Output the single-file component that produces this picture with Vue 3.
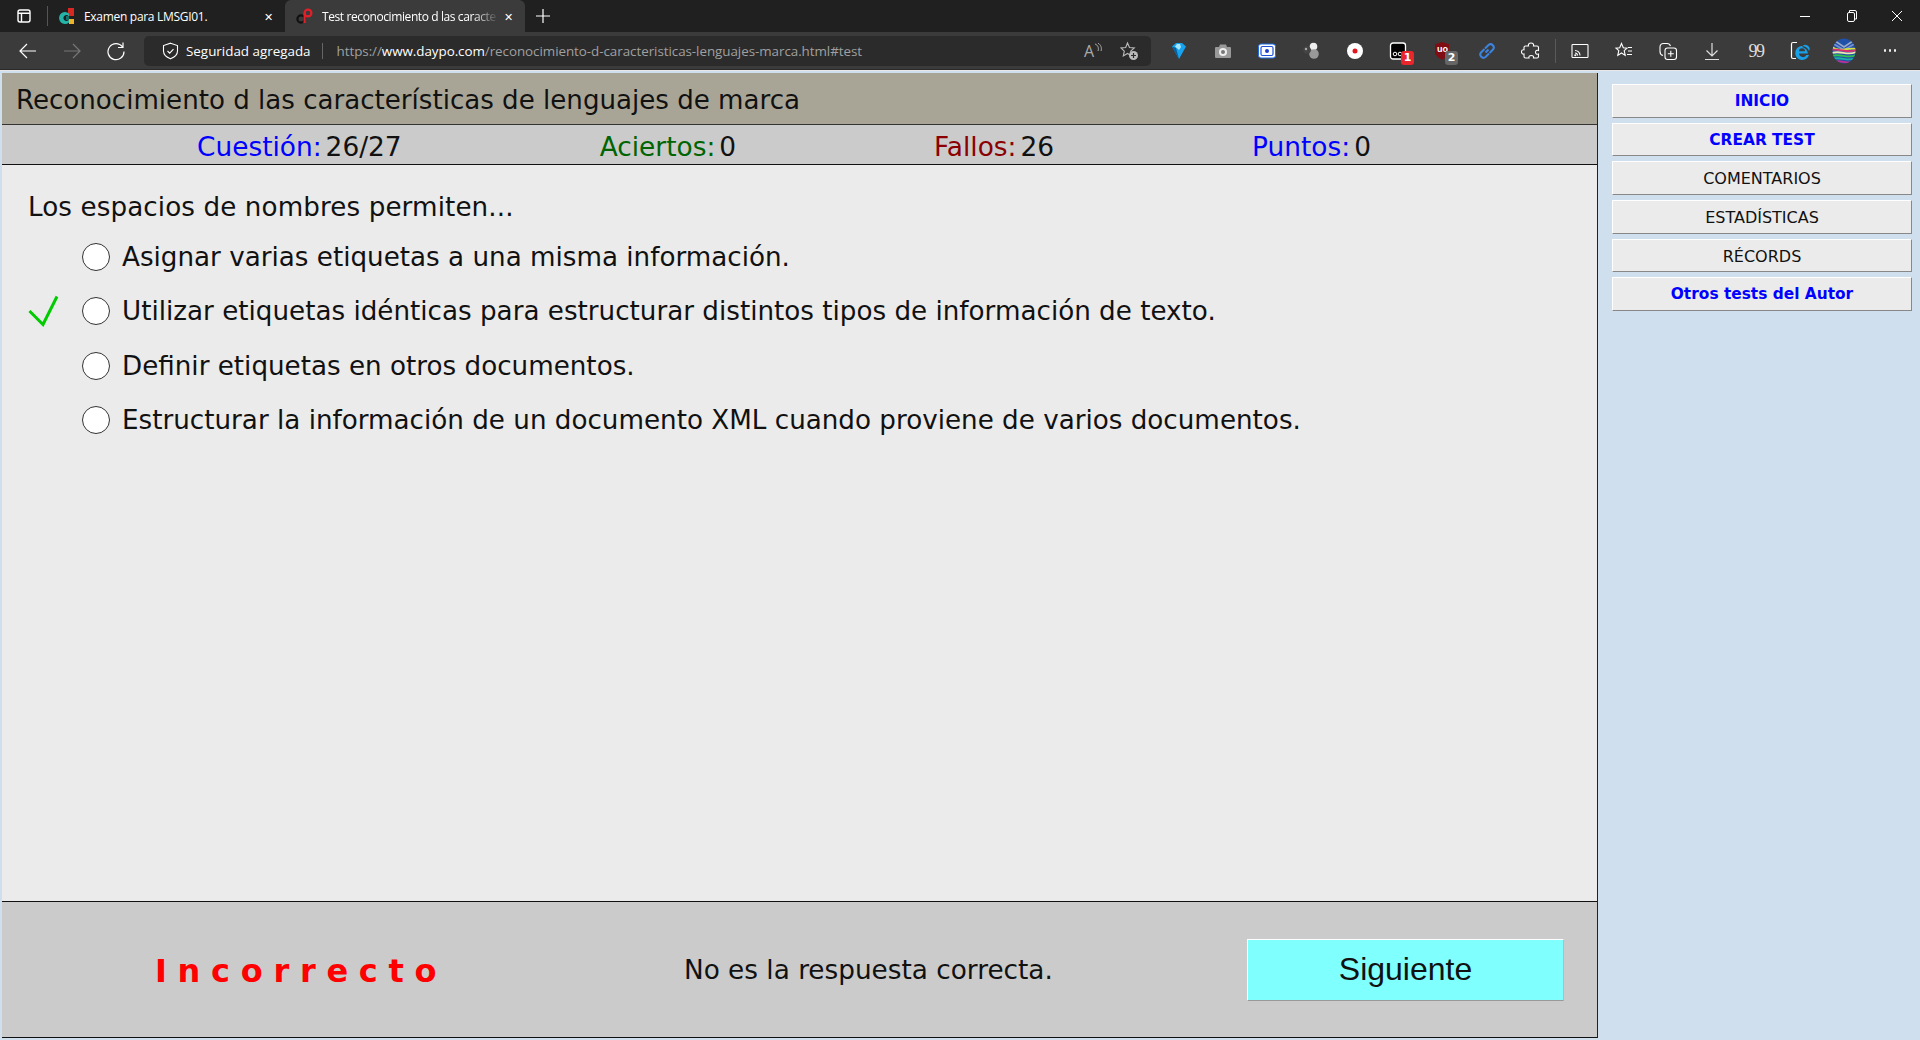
<template>
  <div class="window">
    <div class="tabstrip">
      <svg class="tab-actions" width="16" height="16" viewBox="0 0 16 16" fill="none" stroke="#fff" stroke-width="1.4">
        <rect x="2" y="2" width="12" height="12" rx="2" />
        <path d="M2 5.2h12M5.500 5.2V14" />
      </svg>
      <span class="strip-sep"></span>
      <div class="tab">
        <svg class="fav" width="17" height="17" viewBox="0 0 17 17">
          <rect x="10" y="0" width="6" height="8" fill="#d8281f" />
          <rect x="11" y="11" width="5" height="5" fill="#eeb52a" />
          <path d="M11 5.500A6 6 0 1 0 11 14.500L11 11.500A3 3 0 1 1 11 8.500Z" fill="#25b5a8" />
          <rect x="8" y="8" width="3" height="4" fill="#13736b" />
        </svg>
        <span class="tab-title">Examen para LMSGI01.</span>
        <span class="tab-x">✕</span>
      </div>
      <div class="tab active">
        <svg class="fav" width="17" height="17" viewBox="0 0 17 17" fill="none" stroke-width="2.2">
          <circle cx="5" cy="11" r="3.600" stroke="#111" />
          <circle cx="12" cy="5" r="3.400" stroke="#e3202a" />
          <path d="M8.600 15V5" stroke="#e3202a" />
        </svg>
        <span class="tab-title fade">Test reconocimiento d las caracte</span>
        <span class="tab-x">✕</span>
      </div>
      <svg class="new-tab" width="14" height="14" viewBox="0 0 14 14" stroke="#fff" stroke-width="1.2">
        <path d="M7 0v14M0 7h14" />
      </svg>
      <div class="win-controls">
        <svg width="46" height="16" viewBox="0 0 46 16" stroke="#fff" stroke-width="1"><path d="M18 8.500h10" /></svg>
        <svg width="46" height="16" viewBox="0 0 46 16" fill="none" stroke="#fff" stroke-width="1"><rect x="19.500" y="4.500" width="7" height="9" rx="1.500" /><path d="M21.500 4V2.500h5.500a1.500 1.500 0 0 1 1.500 1.500v7H27" /></svg>
        <svg width="46" height="16" viewBox="0 0 46 16" stroke="#fff" stroke-width="1"><path d="M18 3l10 10M28 3L18 13" /></svg>
      </div>
    </div>

    <div class="toolbar">
      <span class="tool">
        <svg width="20" height="20" viewBox="0 0 20 20" fill="none" stroke="#fff" stroke-width="1.2"><path d="M18 10H2M9 3l-7 7 7 7" /></svg>
      </span>
      <span class="tool">
        <svg width="20" height="20" viewBox="0 0 20 20" fill="none" stroke="#777" stroke-width="1.2"><path d="M2 10h16M11 3l7 7-7 7" /></svg>
      </span>
      <span class="tool">
        <svg width="20" height="20" viewBox="0 0 20 20" fill="none" stroke="#fff" stroke-width="1.2"><path d="M16.500 6A8 8 0 1 0 18 10.500M17 1.500V6.500H12" /></svg>
      </span>
      <div class="address">
        <svg class="shield" width="17" height="18" viewBox="0 0 17 18" fill="none" stroke="#fff" stroke-width="1.1"><path d="M8.500 1.200L15.500 3.600V9c0 3.600-3 6.200-7 7.800C4.500 15.200 1.500 12.600 1.500 9V3.600ZM5.500 9l2.200 2.200 3.800-4" /></svg>
        <span class="secure">Seguridad agregada</span>
        <span class="addr-sep"></span>
        <span class="url">https://<b>www.daypo.com</b>/reconocimiento-d-caracteristicas-lenguajes-marca.html#test</span>
        <span class="addr-icon read">
          A<svg width="9" height="12" viewBox="0 0 9 12" fill="none" stroke="#aaa" stroke-width="1"><path d="M1 1c3 1 4 4 3 7M4 0c3 2 4 5 3 8" /></svg>
        </span>
        <svg class="addr-icon" width="20" height="20" viewBox="0 0 20 20">
          <path d="M8.500 2l2 4.500 4.800.5-3.600 3.200 1 4.800-4.200-2.500-4.200 2.500 1-4.800L2 7l4.700-.5Z" fill="none" stroke="#bbb" stroke-width="1.100" />
          <circle cx="14.500" cy="14.500" r="4.500" fill="#bbb" />
          <path d="M14.500 12v5M12 14.500h5" stroke="#2b2b2b" stroke-width="1.200" />
        </svg>
      </div>
      <div class="ext-icons">
        <span class="tool">
          <svg width="20" height="20" viewBox="0 0 20 20"><path d="M3 5.500L7 2h6l4 3.500L10 18Z" fill="#17a3ee" /><path d="M6 5.500L8 3h3l1 3-2 3Z" fill="#a6e6ff" /><path d="M3 5.500L10 18 7 7Z" fill="#0a5f9e" /></svg>
        </span>
        <span class="tool">
          <svg width="20" height="20" viewBox="0 0 20 20"><path d="M3 6h3l1-2.500h6L14 6h3a1 1 0 0 1 1 1v9a1 1 0 0 1-1 1H3a1 1 0 0 1-1-1V7a1 1 0 0 1 1-1Z" fill="#999" /><circle cx="10" cy="11" r="4" fill="#eee" /><circle cx="10" cy="11" r="2" fill="#777" /></svg>
        </span>
        <span class="tool">
          <svg width="20" height="20" viewBox="0 0 20 20"><rect x="1.500" y="3" width="17" height="14" rx="2.500" fill="#fff" stroke="#1e6ce0" stroke-width="1" /><rect x="4" y="5.500" width="12" height="9" rx="1.500" fill="#fff" stroke="#1e50d8" stroke-width="1.200" /><circle cx="10" cy="10" r="2" fill="#1e3fc8" /></svg>
        </span>
        <span class="tool">
          <svg width="20" height="20" viewBox="0 0 20 20"><circle cx="12.500" cy="5.500" r="3.800" fill="#eee" /><circle cx="13" cy="13" r="4.800" fill="#999" /><circle cx="6" cy="9" r="3.800" fill="#444" /><circle cx="5" cy="8" r="1.200" fill="#aaa" /></svg>
        </span>
        <span class="tool">
          <svg width="20" height="20" viewBox="0 0 20 20"><circle cx="10" cy="10" r="8" fill="#fff" /><circle cx="10" cy="10" r="2.500" fill="#e4161f" /></svg>
        </span>
        <span class="tool">
          <svg width="20" height="20" viewBox="0 0 20 20"><rect x="1.500" y="2" width="15" height="16" rx="2.500" fill="#000" stroke="#fff" stroke-width="1.300" /><circle cx="6" cy="13" r="1.800" fill="none" stroke="#fff" /><circle cx="11" cy="13" r="1.800" fill="none" stroke="#fff" /></svg>
          <span class="badge red">1</span>
        </span>
        <span class="tool">
          <svg width="20" height="20" viewBox="0 0 20 20"><path d="M9 1l7 2.200v7c0 4-3 6.800-7 8.500-4-1.700-7-4.500-7-8.500v-7Z" fill="#7f0d13" /></svg>
          <span class="ublock">uo</span>
          <span class="badge grey">2</span>
        </span>
        <span class="tool">
          <svg width="20" height="20" viewBox="0 0 20 20" fill="none" stroke="#3b84e0" stroke-width="2"><path d="M8.500 11.500l3-3M7.500 8L4 11.500a3.200 3.200 0 0 0 4.500 4.500l3.500-3.500M12.500 12L16 8.500A3.200 3.200 0 0 0 11.500 4L8 7.500" /></svg>
        </span>
        <span class="tool">
          <svg width="20" height="20" viewBox="0 0 20 20" fill="none" stroke="#fff" stroke-width="1.100"><path d="M10 2c2 0 3 1.300 2.500 3H16c1 0 1.500.5 1.500 1.500v3c-1.700-.7-3 .3-3 1.800s1.300 2.300 3 1.700v2.500c0 1-.5 1.500-1.500 1.500h-3.500c.5-1.700-.5-2.500-2.200-2.500s-2.800.8-2.300 2.500H4.500c-1 0-1.500-.5-1.500-1.500V13c-1.500.3-2.500-.8-2.500-2.200S1.500 8.500 3 8.800V6.500C3 5.500 3.500 5 4.500 5h3C7 3.300 8 2 10 2Z" /></svg>
        </span>
      </div>
      <span class="tool-sep"></span>
      <span class="tool">
        <svg width="20" height="20" viewBox="0 0 20 20" fill="none" stroke="#fff" stroke-width="1.100"><rect x="2" y="3.500" width="16" height="13" rx=".8" /><path d="M5 9.500a5 5 0 0 1 5 5M5 12a2.500 2.500 0 0 1 2.500 2.500" /><circle cx="5.300" cy="14.300" r=".5" /></svg>
      </span>
      <span class="tool">
        <svg width="20" height="20" viewBox="0 0 20 20" fill="none" stroke="#fff" stroke-width="1.100"><path d="M7.500 2.500l1.800 4.300 3.700.3-2.800 2.600 1 4.700-3.700-2.400-3.700 2.400 1-4.700L2 7.100l3.700-.3ZM14 6.500h4M14 10h4M13 13.500h5" /></svg>
      </span>
      <span class="tool">
        <svg width="20" height="20" viewBox="0 0 20 20" fill="none" stroke="#fff" stroke-width="1.100"><path d="M5 14.500C3 14 2 12.500 2 10.500V6c0-2.500 1.500-3.500 3.500-3.500H9c1.500 0 3 .8 3.500 2.500" /><rect x="7" y="7" width="11.500" height="11.500" rx="2.500" /><path d="M12.800 9.800v6M9.800 12.800h6" /></svg>
      </span>
      <span class="tool">
        <svg width="20" height="20" viewBox="0 0 20 20" fill="none" stroke="#ddd" stroke-width="1.200"><path d="M10 2v12M4.500 9.500L10 15l5.500-5.500M3 18.500h14" /></svg>
      </span>
      <span class="tool quote">99</span>
      <span class="tool">
        <svg width="22" height="22" viewBox="0 0 22 22" fill="none"><path d="M8 2.500H4A1.500 1.500 0 0 0 2.500 4v13A1.500 1.500 0 0 0 4 18.500h3" stroke="#fff" stroke-width="1.200" /><path d="M19 13.500h-9a4 4 0 0 0 7.500 1.500h2.500a7 7 0 1 1 0-4A4 4 0 0 0 13 7a8 8 0 0 1 6 6.500Z" fill="#18a0e8" /><path d="M10 11.300h6A3 3 0 0 0 10 11.300Z" fill="#3b3b3b" /></svg>
      </span>
      <span class="tool">
        <svg width="24" height="26" viewBox="0 0 24 26">
          <defs><clipPath id="avatar-clip"><ellipse cx="12" cy="13" rx="11.500" ry="12.500" /></clipPath></defs>
          <g clip-path="url(#avatar-clip)" fill="none" stroke-width="1.800">
            <rect width="24" height="26" fill="#2050a8" />
            <path d="M0 1l12 8 12-8" stroke="#98a8c8" />
            <path d="M0 5l12 7 12-7" stroke="#7890d0" />
            <path d="M0 9c8 6 16 0 24 2" stroke="#d8e040" />
            <path d="M0 12c8-2 16 4 24 0" stroke="#d83070" />
            <path d="M0 15c8-3 16 3 24-1" stroke="#e8e8b0" />
            <path d="M0 18c8-3 16 3 24-1" stroke="#30c050" />
            <path d="M0 21c8-3 16 3 24-1" stroke="#18b0a8" />
            <path d="M0 24c8-3 16 3 24-1" stroke="#c03090" />
          </g>
        </svg>
      </span>
      <span class="tool more"><i></i><i></i><i></i></span>
    </div>

    <div class="page">
      <div class="main">
        <h1 class="title">Reconocimiento d las características de lenguajes de marca</h1>
        <div class="stats">
          <span v-for="s in stats" :key="s.label" class="stat">
            <span :style="{ color: s.color }">{{ s.label }}:</span><span class="stat-val">{{ s.value }}</span>
          </span>
        </div>
        <div class="question">
          <p class="q-text">Los espacios de nombres permiten...</p>
          <label v-for="(o, i) in options" :key="i" class="option">
            <span class="mark">
              <svg v-if="o.correct" width="32" height="32" viewBox="0 0 32 32" fill="none" stroke="#00cc00" stroke-width="3">
                <path d="M1.500 16L15 29.500 29 1.500" />
              </svg>
            </span>
            <input type="radio" name="answer" class="radio" />
            <span>{{ o.text }}</span>
          </label>
        </div>
        <div class="result">
          <span class="verdict">Incorrecto</span>
          <span class="explain">No es la respuesta correcta.</span>
          <button class="next">Siguiente</button>
        </div>
      </div>
      <div class="side">
        <a v-for="m in menu" :key="m.text" class="side-btn" :class="{ strong: m.strong }">{{ m.text }}</a>
      </div>
    </div>
  </div>
</template>

<script setup>
const stats = [
  { label: "Cuestión", value: "26/27", color: "#0000ff" },
  { label: "Aciertos", value: "0", color: "#006400" },
  { label: "Fallos", value: "26", color: "#8b0000" },
  { label: "Puntos", value: "0", color: "#0000ff" },
];

const options = [
  { text: "Asignar varias etiquetas a una misma información." },
  { text: "Utilizar etiquetas idénticas para estructurar distintos tipos de información de texto.", correct: true },
  { text: "Definir etiquetas en otros documentos." },
  { text: "Estructurar la información de un documento XML cuando proviene de varios documentos." },
];

const menu = [
  { text: "INICIO", strong: true },
  { text: "CREAR TEST", strong: true },
  { text: "COMENTARIOS" },
  { text: "ESTADÍSTICAS" },
  { text: "RÉCORDS" },
  { text: "Otros tests del Autor", strong: true },
];
</script>

<style>
html,
body {
  margin: 0;
  overflow: hidden;
  background: #cfdfee;
}
</style>

<style scoped>
.window {
  height: 1040px;
  display: flex;
  flex-direction: column;
  font-family: "DejaVu Sans", sans-serif;
}

.tabstrip {
  height: 32px;
  background: #202020;
  display: flex;
  align-items: center;
  color: #fff;
  font-family: "Open Sans", sans-serif;
  font-size: 12px;
}
.tab-actions {
  margin-left: 16px;
}
.strip-sep {
  width: 1px;
  height: 20px;
  background: #555;
  margin: 0 1px 0 15px;
}
.tab {
  width: 236px;
  height: 32px;
  display: flex;
  align-items: center;
  box-sizing: border-box;
  padding: 0 8px 0 9px;
}
.tab.active {
  background: #3b3b3b;
  border-radius: 6px 6px 0 0;
  width: 240px;
  padding-left: 11px;
}
.fav {
  flex: none;
  margin-right: 9px;
}
.tab-title {
  flex: 1;
  white-space: nowrap;
  min-width: 0;
  letter-spacing: -0.3px;
}
.tab-title.fade {
  letter-spacing: -0.4px;
  -webkit-mask-image: linear-gradient(to right, #000 85%, transparent 100%);
  mask-image: linear-gradient(to right, #000 85%, transparent 100%);
}
.tab-x {
  flex: none;
  width: 18px;
  text-align: center;
  font-size: 11px;
}
.new-tab {
  margin-left: 11px;
}
.win-controls {
  margin-left: auto;
  display: flex;
  margin-right: 0;
}

.toolbar {
  height: 38px;
  background: #3b3b3b;
  display: flex;
  align-items: center;
  box-sizing: border-box;
  padding-left: 6px;
  border-bottom: 1px solid #2a2a2a;
}
.tool {
  position: relative;
  width: 44px;
  height: 30px;
  flex: none;
  display: flex;
  align-items: center;
  justify-content: center;
}
.address {
  width: 1007px;
  height: 30px;
  margin: 0 6px;
  flex: none;
  background: #2b2b2b;
  border-radius: 5px;
  display: flex;
  align-items: center;
  box-sizing: border-box;
  font-family: "Open Sans", sans-serif;
  font-size: 13.4px;
}
.shield {
  margin-left: 18px;
}
.secure {
  margin-left: 7px;
  color: #fff;
  white-space: nowrap;
}
.addr-sep {
  width: 1px;
  height: 16px;
  background: #666;
  margin: 0 14px 0 11px;
}
.url {
  color: #a0a0a0;
  white-space: nowrap;
  letter-spacing: -0.050px;
}
.url b {
  color: #fff;
  font-weight: 400;
}
.addr-icon {
  color: #aaa;
  flex: none;
}
.read {
  margin-left: auto;
  margin-right: 16px;
  font-size: 16px;
  display: flex;
  align-items: flex-start;
  line-height: 1;
}
.address > svg.addr-icon {
  margin-right: 12px;
}
.ext-icons {
  display: flex;
}
.badge {
  position: absolute;
  left: 24px;
  top: 15px;
  min-width: 13px;
  height: 14px;
  border-radius: 3px;
  color: #fff;
  font: 700 11px/14px "DejaVu Sans", sans-serif;
  text-align: center;
}
.badge.red {
  background: #e8262b;
}
.badge.grey {
  background: #666;
}
.ublock {
  position: absolute;
  left: 16px;
  top: 8px;
  color: #fff;
  font: 700 9px/10px "Liberation Sans", sans-serif;
}
.tool-sep {
  width: 1px;
  height: 24px;
  background: #5a5a5a;
  margin: 0 2px 0 2px;
  flex: none;
}
.quote {
  color: #ddd;
  font: 400 18px/1 "Liberation Serif", serif;
  letter-spacing: -1.5px;
}
.more {
  gap: 2.500px;
  margin-left: 2px;
}
.more i {
  width: 2.500px;
  height: 2.500px;
  border-radius: 50%;
  background: #eee;
}

.page {
  flex: 1;
  min-height: 0;
  display: flex;
  border-top: 1px solid #e8e8e8;
  padding-top: 2px;
  padding-left: 2px;
  background: #cfdfee;
}
.main {
  width: 1595px;
  height: 965px;
  flex: none;
  display: flex;
  flex-direction: column;
  border-right: 1px solid #222;
  background: #ebebeb;
}
.title {
  margin: 0;
  height: 52px;
  flex: none;
  background: #a9a596;
  border-bottom: 1px solid #333;
  box-sizing: border-box;
  padding: 3px 0 0 14px;
  font-size: 26.1px;
  font-weight: 400;
  line-height: 48px;
  color: #111;
  white-space: nowrap;
}
.stats {
  height: 40px;
  flex: none;
  box-sizing: border-box;
  background: #cbcbcb;
  border-bottom: 1px solid #111;
  display: flex;
  gap: 198px;
  padding: 3px 0 0 195px;
  font-size: 26.4px;
  line-height: 37px;
  color: #111;
}
.stat-val {
  margin-left: 4px;
}
.question {
  flex: 1;
  padding: 24px 0 0 26px;
  font-size: 26.2px;
  color: #111;
}
.q-text {
  margin: 0;
  line-height: 36px;
  height: 40.500px;
  letter-spacing: 0.1px;
}
.option {
  display: flex;
  align-items: center;
  height: 54.500px;
  white-space: nowrap;
}
.mark {
  width: 54px;
  flex: none;
  display: flex;
}
.radio {
  appearance: none;
  width: 28px;
  height: 28px;
  flex: none;
  margin: 0 12px 0 0;
  border-radius: 50%;
  border: 1.500px solid #333;
  background: #fff;
  box-sizing: border-box;
}
.result {
  height: 137px;
  flex: none;
  box-sizing: border-box;
  background: #cbcbcb;
  border-top: 1px solid #111;
  border-bottom: 1px solid #111;
  display: flex;
  align-items: center;
}
.verdict {
  width: 529px;
  box-sizing: border-box;
  padding: 2px 0 0 153px;
  color: #ff0000;
  font-weight: 700;
  font-size: 32px;
  letter-spacing: 10.7px;
  white-space: nowrap;
}
.explain {
  width: 716px;
  box-sizing: border-box;
  padding-left: 153px;
  font-size: 26.3px;
  color: #111;
  white-space: nowrap;
}
.next {
  width: 317px;
  height: 62px;
  flex: none;
  background: #80ffff;
  border: 1px solid;
  border-color: #fff #bbb #999 #fff;
  font-family: "Liberation Sans", sans-serif;
  font-size: 32px;
  color: #111;
  padding: 0;
}
.side {
  flex: 1;
  display: flex;
  flex-direction: column;
  gap: 5px;
  padding: 11px 8px 0 14px;
}
.side-btn {
  height: 33.670px;
  box-sizing: border-box;
  background: #ebebeb;
  border: 1px solid;
  border-color: #fff #888 #888 #fff;
  text-align: center;
  color: #111;
  font-size: 16px;
  line-height: 33px;
}
.side-btn.strong {
  color: #0000ff;
  font-weight: 700;
  font-size: 15.4px;
}
</style>
